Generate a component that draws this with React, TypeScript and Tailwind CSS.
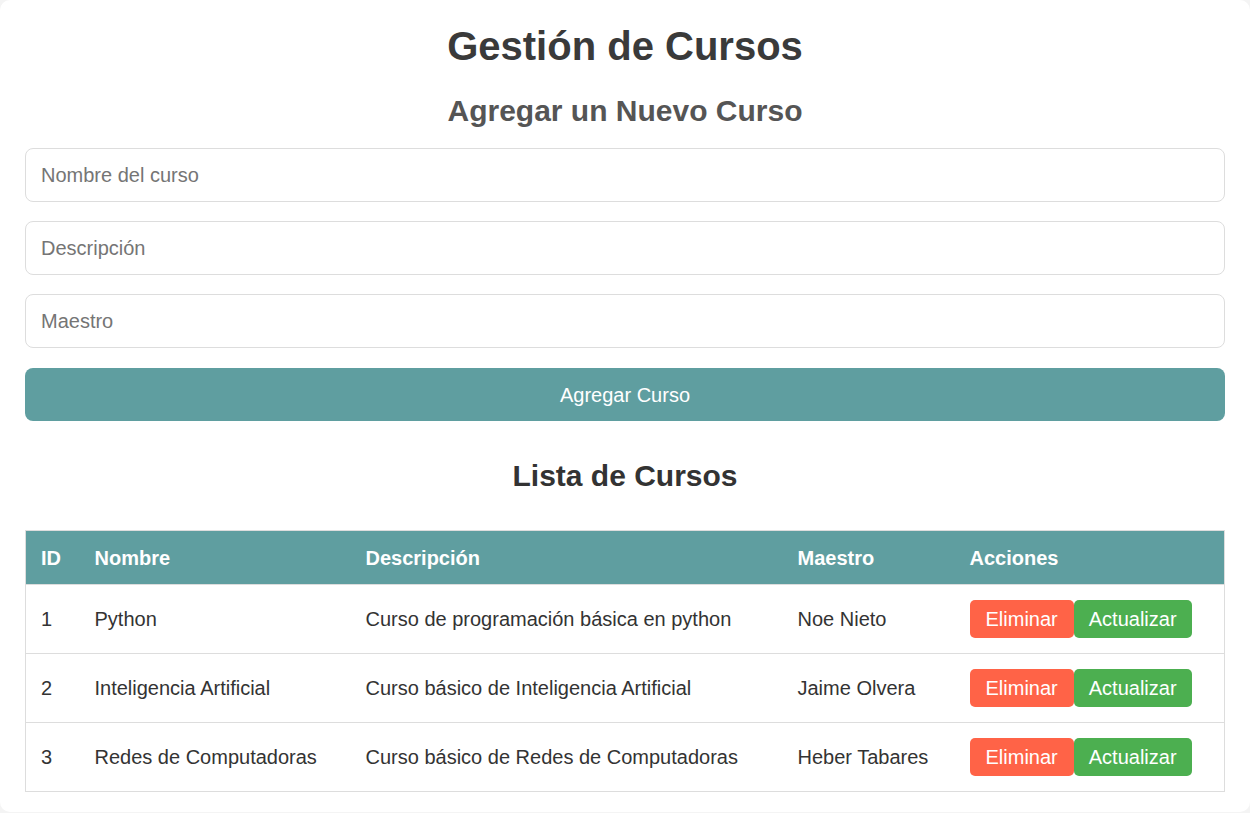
const cursos = [
  { id: 1, nombre: 'Python', descripcion: 'Curso de programación básica en python', maestro: 'Noe Nieto' },
  { id: 2, nombre: 'Inteligencia Artificial', descripcion: 'Curso básico de Inteligencia Artificial', maestro: 'Jaime Olvera' },
  { id: 3, nombre: 'Redes de Computadoras', descripcion: 'Curso básico de Redes de Computadoras', maestro: 'Heber Tabares' },
]

export default function App() {
  return (
    <div className="h-[813px] w-[1250px] overflow-hidden bg-[#f4f4f4] font-['Liberation_Sans',Arial,sans-serif] text-[#333]">
      <div className="h-[812px] w-[1250px] rounded-[10px] bg-white px-[25px] pt-[23px]">
        <h1 className="text-center text-[40px] font-bold leading-[46px] text-[#3a3a3a]">Gestión de Cursos</h1>
        <h2 className="mt-[25px] text-center text-[30px] font-bold leading-[34px] text-[#555]">
          Agregar un Nuevo Curso
        </h2>

        <div className="mt-[20px] flex flex-col gap-[19px]">
          <input
            placeholder="Nombre del curso"
            className="h-[54px] w-full rounded-[8px] border border-[#ddd] px-[15px] text-[20px] outline-none placeholder:text-[#757575]"
          />
          <input
            placeholder="Descripción"
            className="h-[54px] w-full rounded-[8px] border border-[#ddd] px-[15px] text-[20px] outline-none placeholder:text-[#757575]"
          />
          <input
            placeholder="Maestro"
            className="h-[54px] w-full rounded-[8px] border border-[#ddd] px-[15px] text-[20px] outline-none placeholder:text-[#757575]"
          />
          <button className="mt-px h-[53px] w-full rounded-[8px] bg-[#5f9ea0] text-[20px] text-white">Agregar Curso</button>
        </div>

        <h2 className="mt-[38px] text-center text-[30px] font-bold leading-[34px] text-[#333]">Lista de Cursos</h2>

        <table className="mt-[37px] w-full table-fixed border-collapse text-left text-[20px]">
          <thead>
            <tr className="h-[54px] bg-[#5f9ea0] text-white">
              <th className="w-[54px] border border-[#ddd] border-r-0 px-[15px] font-bold">ID</th>
              <th className="w-[271px] border-y border-[#ddd] px-[15px] font-bold">Nombre</th>
              <th className="w-[432px] border-y border-[#ddd] px-[15px] font-bold">Descripción</th>
              <th className="w-[172px] border-y border-[#ddd] px-[15px] font-bold">Maestro</th>
              <th className="border border-[#ddd] border-l-0 px-[15px] font-bold">Acciones</th>
            </tr>
          </thead>
          <tbody>
            {cursos.map((c) => (
              <tr key={c.id} className="h-[69px] border border-[#ddd]">
                <td className="px-[15px]">{c.id}</td>
                <td className="px-[15px]">{c.nombre}</td>
                <td className="px-[15px]">{c.descripcion}</td>
                <td className="px-[15px]">{c.maestro}</td>
                <td className="px-[15px]">
                  <div className="flex">
                    <button className="h-[38px] rounded-[5px] bg-[#ff6347] px-[16px] text-[20px] text-white">
                      Eliminar
                    </button>
                    <button className="h-[38px] rounded-[5px] bg-[#4caf50] px-[15px] text-[20px] text-white">
                      Actualizar
                    </button>
                  </div>
                </td>
              </tr>
            ))}
          </tbody>
        </table>
      </div>
    </div>
  )
}
